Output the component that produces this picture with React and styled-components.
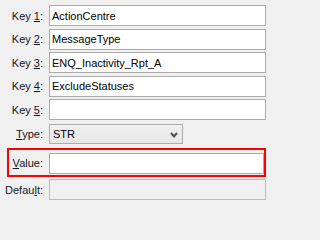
import React from "react";
import styled, { createGlobalStyle } from "styled-components";

const GlobalStyle = createGlobalStyle`
  html, body {
    margin: 0;
    padding: 0;
    background-color: #f0f0f0;
  }
  body {
    font-family: "Liberation Sans", Arial, sans-serif;
    font-size: 11px;
    color: #111;
  }
`;

const Form = styled.div`
  width: 266px;
  height: 202px;
  padding-top: 5px;
  box-sizing: border-box;
  display: flex;
  flex-direction: column;
  gap: 2.5px;
  background-color: #f0f0f0;
`;

const Row = styled.div`
  display: flex;
  align-items: center;
  gap: 6px;
  height: 21px;
  margin-top: ${(p) => p.$push || 0}px;
`;

const Highlight = styled.div`
  display: flex;
  align-items: center;
  gap: 6px;
  margin: 0 0 0 7px;
  margin-top: 0.5px;
  padding: 3px 0 1px 0;
  border: 2px solid #ff0000;
  & > label {
    width: 34px;
  }
`;

const Label = styled.label`
  width: 43px;
  flex-shrink: 0;
  text-align: right;
  white-space: nowrap;
  color: #141428;
  & > u {
    text-decoration: underline;
    text-underline-offset: 1px;
  }
`;

const TextBox = styled.input`
  flex: 1;
  min-width: 0;
  height: 21px;
  box-sizing: border-box;
  margin: 0;
  padding: 0 2px;
  border: 1px solid #ababab;
  border-radius: 0;
  outline: none;
  background-color: ${(p) => (p.disabled ? "#f0f0f0" : "#ffffff")};
  border-color: ${(p) => (p.disabled ? "#bcbcbc" : "#ababab")};
  font-family: "Liberation Sans", Arial, sans-serif;
  font-size: 11px;
  color: #000;
`;

const SelectBox = styled.div`
  width: 134px;
  height: 20px;
  box-sizing: border-box;
  display: flex;
  align-items: center;
  justify-content: space-between;
  padding: 0 4px 0 3px;
  border: 1px solid #acacac;
  background: linear-gradient(#f2f2f2, #e6e6e6);
  color: #000;
  & > svg {
    margin-top: 1px;
  }
`;

const Chevron = () => (
  <svg width="8" height="6" viewBox="0 0 8 6">
    <path d="M1 1 L4 4.5 L7 1" fill="none" stroke="#505050" strokeWidth="2" />
  </svg>
);

const keys = [
  { n: "1", value: "ActionCentre" },
  { n: "2", value: "MessageType" },
  { n: "3", value: "ENQ_Inactivity_Rpt_A" },
  { n: "4", value: "ExcludeStatuses" },
  { n: "5", value: "" },
];

export default function App() {
  return (
    <>
      <GlobalStyle />
      <Form>
        {keys.map((k) => (
          <Row key={k.n}>
            <Label>
              Key <u>{k.n}</u>:
            </Label>
            <TextBox defaultValue={k.value} />
          </Row>
        ))}
        <Row $push={1}>
          <Label>
            <u>T</u>ype:
          </Label>
          <SelectBox>
            <span>STR</span>
            <Chevron />
          </SelectBox>
        </Row>
        <Highlight>
          <Label>
            <u>V</u>alue:
          </Label>
          <TextBox defaultValue="" />
        </Highlight>
        <Row>
          <Label>
            Defau<u>l</u>t:
          </Label>
          <TextBox disabled defaultValue="" />
        </Row>
      </Form>
    </>
  );
}
